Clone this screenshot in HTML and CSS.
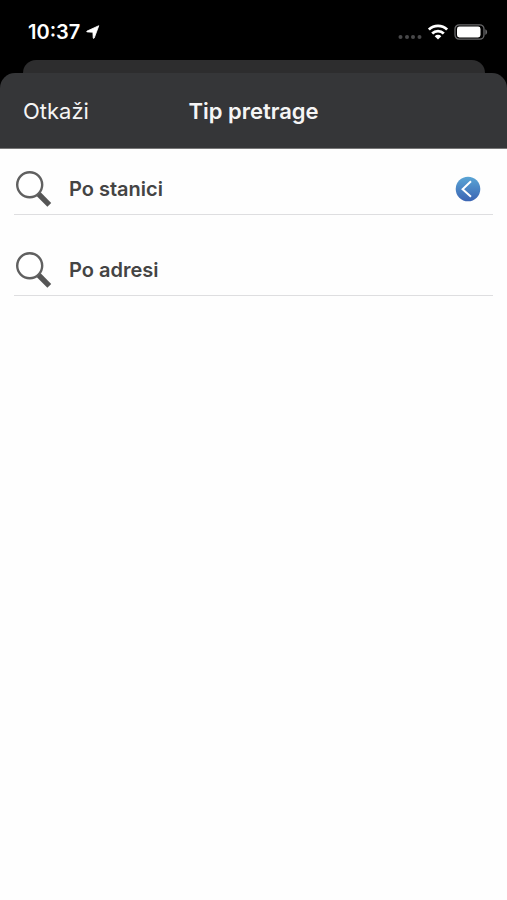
FILE: index.html
```html
<!DOCTYPE html>
<html lang="sr-Latn">
<head>
  <meta charset="utf-8">
  <meta name="viewport" content="width=device-width, initial-scale=1">
  <title>Tip pretrage</title>
  <link rel="stylesheet" href="styles.css">
</head>
<body>
  <div class="status-bar">
    <div class="status-left">
      <time class="clock">10:37</time>
      <svg class="location" viewBox="0 0 14 14" aria-hidden="true"><path d="M12.800.7 1 6.100c-.5.300-.4.800.2.800l5.700.3.300 5.700c0 .6.700.7 1 .2z" fill="#fff" stroke="#fff" stroke-width=".8" stroke-linejoin="round"/></svg>
    </div>
    <div class="status-right">
      <svg class="signal" viewBox="0 0 24 6" aria-hidden="true"><g fill="#48484a"><circle cx="2.500" cy="3" r="2"/><circle cx="9" cy="3" r="2"/><circle cx="15" cy="3" r="2"/><circle cx="21.500" cy="3" r="2"/></g></svg>
      <svg class="wifi" viewBox="0 0 20 16" aria-hidden="true"><g fill="none" stroke="#fff" stroke-width="2.800"><path d="M.9 5.600a13 13 0 0 1 18.200 0"/><path d="M4.200 9.400a8.300 8.300 0 0 1 11.600 0"/></g><path d="M10 15.600 6.700 12.300a4.500 4.500 0 0 1 6.600 0z" fill="#fff"/></svg>
      <svg class="battery" viewBox="0 0 34 16" aria-hidden="true"><rect x="1" y=".8" width="29" height="14.400" rx="4.200" fill="none" stroke="#68686a" stroke-width="1.300"/><rect x="3" y="2.600" width="23.500" height="10.800" rx="2.400" fill="#fff"/><path d="M31.300 5.200c2.400.7 2.400 4.900 0 5.600z" fill="#68686a"/></svg>
    </div>
  </div>
  <div class="sheet-behind"></div>
  <header class="header">
    <button class="cancel" type="button">Otkaži</button>
    <h1 class="title">Tip pretrage</h1>
  </header>
  <main>
    <ul class="options">
      <li>
        <button class="option" type="button" aria-pressed="true">
          <svg class="search" viewBox="0 0 38 38" aria-hidden="true"><path d="m23.500 24 10.800 10.800" stroke="#555" stroke-width="5.400" fill="none"/><circle cx="14.700" cy="14.700" r="12.500" fill="#fff" stroke="#606060" stroke-width="2.400"/></svg>
          <span class="label">Po stanici</span>
          <svg class="marker" viewBox="0 0 26 26" aria-hidden="true"><defs><linearGradient id="blue" x1="0" y1="0" x2="0" y2="1"><stop offset="0" stop-color="#5aa5d5"/><stop offset="1" stop-color="#3b64b3"/></linearGradient></defs><circle cx="13" cy="13" r="12.300" fill="url(#blue)"/><path d="m16 5.300-8.400 7.900 8.400 7.500" fill="none" stroke="#fff" stroke-width="2"/></svg>
        </button>
      </li>
      <li>
        <button class="option" type="button" aria-pressed="false">
          <svg class="search" viewBox="0 0 38 38" aria-hidden="true"><path d="m23.500 24 10.800 10.800" stroke="#555" stroke-width="5.400" fill="none"/><circle cx="14.700" cy="14.700" r="12.500" fill="#fff" stroke="#606060" stroke-width="2.400"/></svg>
          <span class="label">Po adresi</span>
        </button>
      </li>
    </ul>
  </main>
</body>
</html>
```
FILE: styles.css
```css
* {
  box-sizing: border-box;
}

body {
  margin: 0;
  min-height: 100vh;
  display: flex;
  flex-direction: column;
  background: #000;
  font-family: Inter, "Liberation Sans", sans-serif;
}

button {
  border: 0;
  padding: 0;
  background: none;
  font-family: inherit;
  cursor: pointer;
}

svg {
  display: block;
  flex: none;
}

.status-bar {
  display: flex;
  justify-content: space-between;
  align-items: center;
  height: 60px;
  padding: 4px 19px 0 28px;
  color: #fff;
}

.status-left,
.status-right {
  display: flex;
  align-items: center;
}

.status-left {
  gap: 6px;
}

.clock {
  font-size: 20px;
  font-weight: 600;
}

.location {
  width: 14px;
  height: 14px;
}

.status-right {
  gap: 6px;
}

.signal {
  width: 24px;
  height: 6px;
  margin-top: 10px;
}

.wifi {
  width: 20px;
  height: 16px;
}

.battery {
  width: 34px;
  height: 16px;
}

.sheet-behind {
  height: 13px;
  margin: 0 22px 0 23px;
  border-radius: 13px 13px 0 0;
  background: #2d2d2e;
}

.header {
  display: grid;
  grid-template-columns: 1fr auto 1fr;
  align-items: center;
  height: 76px;
  padding: 1px 23px 0;
  border-bottom: 1px solid #777;
  border-radius: 15px 15px 0 0;
  background: #353638;
  color: #f5f5f5;
}

.cancel {
  justify-self: start;
  color: inherit;
  font-size: 22px;
}

.title {
  margin: 0;
  font-size: 22px;
  font-weight: 600;
}

main {
  flex: 1;
  background: #fefefe;
}

.options {
  display: flex;
  flex-direction: column;
  gap: 15px;
  margin: 0;
  padding: 0 14px;
  list-style: none;
}

.option {
  display: flex;
  align-items: center;
  gap: 16px;
  width: 100%;
  height: 66px;
  padding: 14px 12px 0 1px;
  border-bottom: 1px solid #dedee0;
  color: #444;
  text-align: left;
}

.search {
  width: 38px;
  height: 38px;
}

.label {
  flex: 1;
  font-size: 20px;
  font-weight: 600;
}

.marker {
  width: 26px;
  height: 26px;
}
```
